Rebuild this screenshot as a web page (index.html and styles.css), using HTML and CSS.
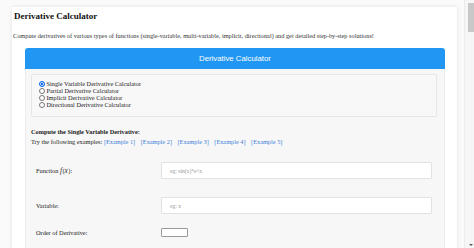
FILE: index.html
```html
<!DOCTYPE html>
<html>
<head>
<meta charset="utf-8">
<link rel="stylesheet" href="styles.css">
</head>
<body>
<div class="screen">
  <div class="viewport">
    <div class="card">
      <h1 class="title">Derivative Calculator</h1>
      <p class="desc">Compute derivatives of various types of functions (single-variable, multi-variable, implicit, directional) and get detailed step-by-step solutions!</p>
      <div class="calc">
        <div class="calc-head">Derivative Calculator</div>
        <div class="calc-body">
          <div class="modes">
            <label class="mode"><span class="radio on"></span>Single Variable Derivative Calculator</label>
            <label class="mode"><span class="radio"></span>Partial Derivative Calculator</label>
            <label class="mode"><span class="radio"></span>Implicit Derivative Calculator</label>
            <label class="mode"><span class="radio"></span>Directional Derivative Calculator</label>
          </div>
          <div class="section">
            <div class="sec-title">Compute the Single Variable Derivative:</div>
            <div class="examples">Try the following examples: <a>[Example 1]</a><a>[Example 2]</a><a>[Example 3]</a><a>[Example 4]</a><a>[Example 5]</a></div>
          </div>
          <div class="row row-fn">
            <div class="lbl">Function <i class="math">f</i>(<i class="math">x</i>):</div>
            <div class="input"><span class="ph">eg: sin(x)*e^x</span></div>
          </div>
          <div class="row row-var">
            <div class="lbl">Variable:</div>
            <div class="input"><span class="ph">eg: x</span></div>
          </div>
          <div class="row row-ord">
            <div class="lbl">Order of Derivative:</div>
            <div class="input small"></div>
          </div>
        </div>
      </div>
    </div>
  </div>
  <div class="scrollbar">
    <div class="thumb"></div>
    <div class="spacer"></div>
    <div class="arrow"></div>
  </div>
</div>
</body>
</html>
```
FILE: styles.css
```css
html, body {
  margin: 0;
  padding: 0;
  background: #fafafa;
}
.screen {
  display: flex;
  width: 474px;
  height: 248px;
  overflow: hidden;
  font-family: "Liberation Serif", "Times New Roman", serif;
  color: #222;
}
.viewport {
  flex: 1;
  padding: 7px 7px 0 12px;
  overflow: hidden;
}
.card {
  background: #fff;
  box-shadow: 0 0 4px rgba(0,0,0,0.10);
  height: 260px;
  padding-top: 1px;
}
.title {
  margin: 3px 0 0 2px;
  font-size: 9px;
  line-height: 11px;
  font-weight: bold;
  color: #111;
}
.desc {
  margin: 10px 0 0 1px;
  font-size: 6.3px;
  line-height: 7px;
  color: #333;
}
.calc {
  margin: 9px 12px 0 13px;
}
.calc-head {
  background: #2196f3;
  color: #fff;
  font-family: "Liberation Sans", Arial, sans-serif;
  font-size: 7.8px;
  height: 21px;
  line-height: 21px;
  text-align: center;
  border-radius: 3px 3px 0 0;
}
.calc-body {
  background: #f7f7f7;
  border: 1px solid #ececec;
  border-top: none;
  padding: 5px 7px 0 5px;
  height: 200px;
}
.modes {
  border: 1px solid #e6e6e6;
  border-radius: 2px;
  background: #f8f8f8;
  padding: 5px 7px 8px 7px;
}
.mode {
  display: flex;
  align-items: center;
  font-size: 6.3px;
  line-height: 7px;
  height: 7px;
  color: #222;
}
.radio {
  width: 4px;
  height: 4px;
  border: 0.6px solid #777;
  border-radius: 50%;
  background: #fff;
  margin-right: 1.5px;
  box-sizing: content-box;
}
.radio.on {
  border-color: #1a73e8;
  background: #1a73e8;
  box-shadow: inset 0 0 0 0.8px #fff;
}
.section {
  margin-top: 10px;
}
.sec-title {
  font-size: 6.3px;
  font-weight: bold;
  line-height: 10px;
}
.examples {
  font-size: 6.3px;
  line-height: 10px;
  color: #222;
}
.examples a {
  color: #3b7fd9;
  margin-right: 5.5px;
}
.row {
  display: flex;
  align-items: center;
  padding-left: 5px;
}
.row-fn {
  margin-top: 15px;
}
.row-var {
  margin-top: 18px;
}
.row-ord {
  margin-top: 14px;
}
.lbl {
  width: 125px;
  font-size: 6.3px;
  color: #222;
}
.math {
  font-family: "Liberation Serif", serif;
  font-size: 7.3px;
  padding-right: 0.5px;
}
.input {
  width: 271px;
  height: 17px;
  box-sizing: border-box;
  background: #fff;
  border: 1px solid #e2e2e2;
  border-radius: 1px;
  display: flex;
  align-items: center;
  padding-left: 8px;
}
.input.small {
  width: 27px;
  height: 9px;
  border: 1px solid #9a9a9a;
}
.ph {
  font-size: 5.6px;
  color: #9a9a9a;
}
.scrollbar {
  width: 10px;
  background: #f6f6f6;
  border-left: 1px solid #ececec;
  display: flex;
  flex-direction: column;
  align-items: flex-end;
  box-sizing: border-box;
}
.thumb {
  width: 6px;
  height: 29px;
  margin-top: 3px;
  background: #c8c8c8;
}
.spacer {
  flex: 1;
}
.arrow {
  width: 0;
  height: 0;
  border-left: 2px solid transparent;
  border-right: 2px solid transparent;
  border-top: 2px solid #555;
  margin: 0 1px 2px 0;
}
```
